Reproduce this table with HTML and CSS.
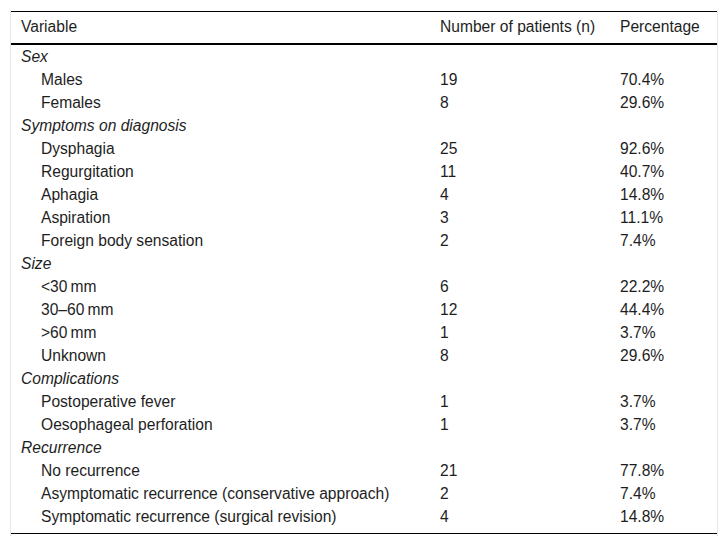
FILE: index.html
```html
<!DOCTYPE html>
<html>
<head>
<meta charset="utf-8">
<link rel="stylesheet" href="styles.css">
</head>
<body>
<div class="wrap">
<table class="data">
<thead>
<tr><th class="c1">Variable</th><th class="c2">Number of patients (n)</th><th class="c3">Percentage</th></tr>
</thead>
<tbody>
<tr><td class="grp" colspan="3">Sex</td></tr>
<tr><td class="sub">Males</td><td>19</td><td>70.4%</td></tr>
<tr><td class="sub">Females</td><td>8</td><td>29.6%</td></tr>
<tr><td class="grp" colspan="3">Symptoms on diagnosis</td></tr>
<tr><td class="sub">Dysphagia</td><td>25</td><td>92.6%</td></tr>
<tr><td class="sub">Regurgitation</td><td>11</td><td>40.7%</td></tr>
<tr><td class="sub">Aphagia</td><td>4</td><td>14.8%</td></tr>
<tr><td class="sub">Aspiration</td><td>3</td><td>11.1%</td></tr>
<tr><td class="sub">Foreign body sensation</td><td>2</td><td>7.4%</td></tr>
<tr><td class="grp" colspan="3">Size</td></tr>
<tr><td class="sub">&lt;30&#8201;mm</td><td>6</td><td>22.2%</td></tr>
<tr><td class="sub">30–60&#8201;mm</td><td>12</td><td>44.4%</td></tr>
<tr><td class="sub">&gt;60&#8201;mm</td><td>1</td><td>3.7%</td></tr>
<tr><td class="sub">Unknown</td><td>8</td><td>29.6%</td></tr>
<tr><td class="grp" colspan="3">Complications</td></tr>
<tr><td class="sub">Postoperative fever</td><td>1</td><td>3.7%</td></tr>
<tr><td class="sub">Oesophageal perforation</td><td>1</td><td>3.7%</td></tr>
<tr><td class="grp" colspan="3">Recurrence</td></tr>
<tr><td class="sub">No recurrence</td><td>21</td><td>77.8%</td></tr>
<tr><td class="sub">Asymptomatic recurrence (conservative approach)</td><td>2</td><td>7.4%</td></tr>
<tr class="last"><td class="sub">Symptomatic recurrence (surgical revision)</td><td>4</td><td>14.8%</td></tr>
</tbody>
</table>
</div>
</body>
</html>
```
FILE: styles.css
```css
html, body {
  margin: 0;
  padding: 0;
  background: #ffffff;
}
.wrap {
  margin: 10px 0 0 10px;
  width: 706px;
  border-left: 1px solid #e6e6e6;
  border-right: 1px solid #e6e6e6;
  padding: 1px 0 2px 0;
}
.data {
  width: 706px;
  border-collapse: collapse;
  table-layout: fixed;
  font-family: "Liberation Sans", Arial, sans-serif;
  font-size: 15.6px;
  line-height: 18px;
  color: #1e1e1e;
  border-top: 1px solid #000;
  border-bottom: 1px solid #000;
}
.data th {
  font-weight: normal;
  text-align: left;
  padding: 6px 10px 7px 10px;
  border-bottom: 2px solid #000;
  white-space: nowrap;
}
.c1 { width: 399px; }
.c2 { width: 160px; }
.c3 { width: 87px; }
.data td {
  padding: 2.5px 10px;
  white-space: nowrap;
}
.data td.grp {
  font-style: italic;
}
.data td.sub {
  padding-left: 30px;
}
.data tr.last td {
  padding-bottom: 7.5px;
}
```
